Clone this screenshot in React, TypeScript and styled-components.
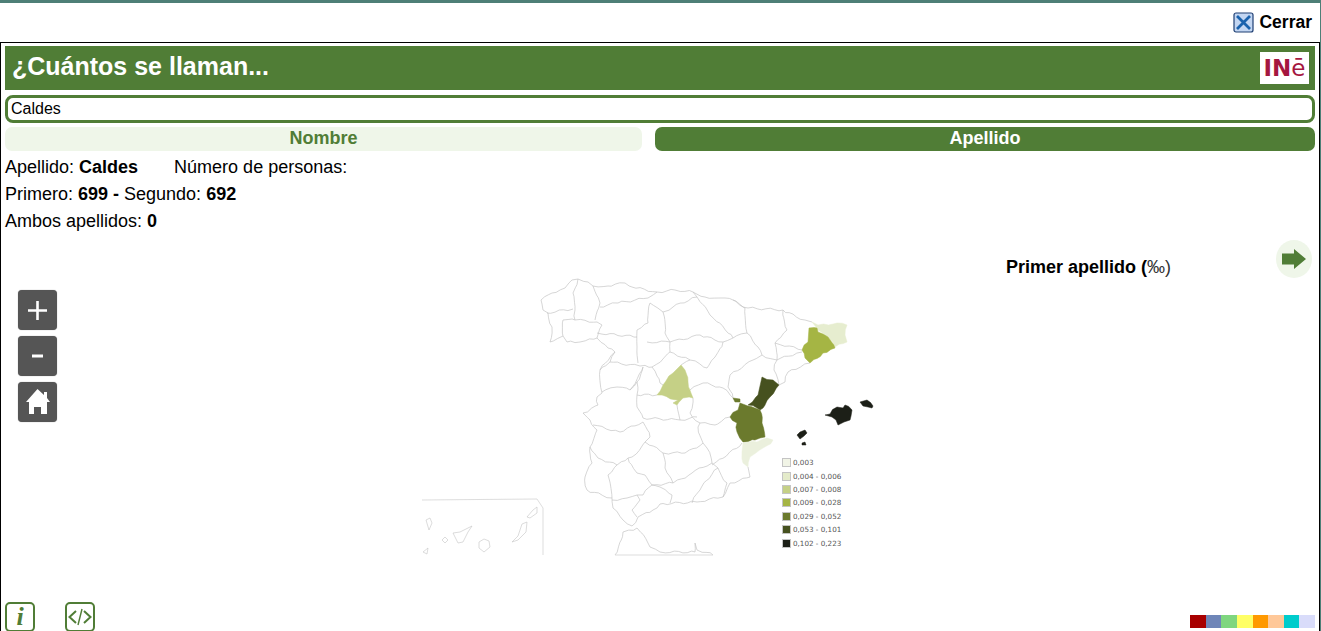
import * as React from 'react'
import styled, { createGlobalStyle } from 'styled-components'

const GREEN = '#507d36'
const BORDER_LINE = '#c4c4c4'

const GlobalStyle = createGlobalStyle`
  html, body {
    margin: 0;
    height: 100%;
    overflow: hidden;
    background: #fff;
    font-family: "Liberation Sans", Arial, sans-serif;
    color: #000;
  }
`

const Page = styled.div`
  width: 1321px;
  height: 631px;
  overflow: hidden;
  display: flex;
  flex-direction: column;
  box-sizing: border-box;
  border-top: 3px solid #4e7f77;
  border-right: 1px solid #4e7f77;
`

const CloseRow = styled.div`
  height: 39px;
  flex: none;
  display: flex;
  align-items: center;
  justify-content: flex-end;
  gap: 5px;
  padding: 0 8px 1px 0;
  box-sizing: border-box;
  font-size: 17.5px;
  font-weight: 700;
`

const Panel = styled.div`
  flex: 1;
  min-height: 0;
  display: flex;
  flex-direction: column;
  box-sizing: border-box;
  border: 1px solid #000;
  border-bottom: 0;
  padding: 3px 4px 0;
`

const Header = styled.div`
  height: 44px;
  flex: none;
  display: flex;
  align-items: center;
  justify-content: space-between;
  padding: 0 6px 0 7px;
  box-sizing: border-box;
  background: ${GREEN};
`

const Title = styled.div`
  font-size: 25px;
  font-weight: 700;
  color: #fff;
  padding-bottom: 3px;
`

const Logo = styled.div`
  width: 49px;
  height: 32px;
  display: flex;
  align-items: center;
  justify-content: center;
  background: #fff;
  color: #a5173f;
  font-family: "DejaVu Sans", sans-serif;
  font-size: 23px;
  font-weight: 700;
`

const LogoE = styled.span`
  font-weight: 400;
`

const Search = styled.input`
  height: 28px;
  flex: none;
  margin-top: 5px;
  padding: 0 3px;
  box-sizing: border-box;
  border: 3px solid ${GREEN};
  border-radius: 8px;
  outline: none;
  background: #fff;
  font-family: inherit;
  font-size: 16px;
  color: #000;
`

const Tabs = styled.div`
  flex: none;
  display: grid;
  grid-template-columns: 637px 660px;
  gap: 13px;
  margin-top: 4px;
`

const Tab = styled.div<{ $active?: boolean }>`
  height: 24px;
  line-height: 23px;
  text-align: center;
  border-radius: 7px;
  font-size: 18px;
  font-weight: 700;
  background: ${props => (props.$active ? GREEN : '#eff6e9')};
  color: ${props => (props.$active ? '#fff' : GREEN)};
`

const Info = styled.div`
  flex: none;
  margin-top: 3px;
  font-size: 18px;
  line-height: 27px;
`

const Gap = styled.span`
  display: inline-block;
  width: 36px;
`

const MapArea = styled.div`
  position: relative;
  height: 367px;
  flex: none;
  padding: 40px 0 0 415px;
  box-sizing: border-box;
`

const MapDrawing = styled.svg`
  display: block;
  filter: blur(0.3px);
`

const ZoomControls = styled.div`
  position: absolute;
  left: 13px;
  top: 55px;
  display: flex;
  flex-direction: column;
  gap: 6px;
`

const ZoomButton = styled.div`
  width: 39px;
  height: 40px;
  border-radius: 4px;
  background: #555;
  box-shadow: 0 0 1px #888;
  display: flex;
  align-items: center;
  justify-content: center;
`

const MapTitle = styled.div`
  position: absolute;
  left: 1001px;
  top: 22px;
  font-size: 18px;
  font-weight: 700;
`

const Permil = styled.span`
  font-weight: 400;
  color: #333;
`

const NextButton = styled.div`
  position: absolute;
  left: 1271px;
  top: 5px;
  width: 36px;
  height: 38px;
  border-radius: 50%;
  background: #eff6e9;
  display: flex;
  align-items: center;
  justify-content: center;
`

const Legend = styled.div`
  position: absolute;
  left: 777px;
  top: 221px;
  display: flex;
  flex-direction: column;
`

const LegendRow = styled.div`
  height: 13.4px;
  display: flex;
  align-items: center;
  gap: 2px;
  font-family: "DejaVu Sans", Verdana, sans-serif;
  font-size: 7.2px;
  color: #555;
`

const LegendSwatch = styled.span<{ $color: string }>`
  width: 7px;
  height: 7px;
  border: 1px solid #c4c4c4;
  background: ${props => props.$color};
`

const BottomBar = styled.div`
  flex: none;
  display: flex;
  justify-content: space-between;
`

const Tools = styled.div`
  display: flex;
  gap: 30px;
`

const ToolButton = styled.div`
  width: 30px;
  height: 30px;
  box-sizing: border-box;
  border: 2px solid ${GREEN};
  border-radius: 5px;
  display: flex;
  align-items: center;
  justify-content: center;
  color: ${GREEN};
`

const InfoGlyph = styled.span`
  font-family: "Liberation Serif", serif;
  font-size: 26px;
  font-weight: 700;
  font-style: italic;
  line-height: 24px;
`

const Palette = styled.div`
  display: flex;
  margin-top: 13px;
`

const PaletteColor = styled.span<{ $color: string }>`
  width: 15.625px;
  height: 13px;
  background: ${props => props.$color};
`

// rough, repeatable wiggle so the province borders don't look like straight polylines
const wiggle = (line: string) => {
  const pts = line.split(' ').map(p => p.split(',').map(Number))
  const out: string[] = []
  pts.forEach((p, i) => {
    out.push(`${p[0]},${p[1]}`)
    const next = pts[i + 1]
    if (!next) return
    const len = Math.hypot(next[0] - p[0], next[1] - p[1])
    const steps = Math.floor(len / 4)
    for (let s = 1; s < steps; s++) {
      const t = s / steps
      const nx = Math.sin(p[0] * 12.9 + p[1] * 78.2 + s * 37.7) * 1.1
      const ny = Math.cos(p[0] * 39.3 + p[1] * 11.1 + s * 17.3) * 1.1
      out.push(`${(p[0] + (next[0] - p[0]) * t + nx).toFixed(1)},${(p[1] + (next[1] - p[1]) * t + ny).toFixed(1)}`)
    }
  })
  return out.join(' ')
}

const BORDERS = [
  // coast and frontier
  '541,300 552,293 565,288 572,280 578,279 588,282 593,286 608,286 625,283 632,287 657,292 675,290 693,292 705,297 720,298 733,300 748,308 783,310 805,320 812,322',
  '541,300 543,310 548,313 552,327 550,342 563,336 567,342 580,342 597,338',
  '597,338 608,348 615,352 600,370 602,393 597,397 598,405 583,413 590,420 597,430 590,447 592,463 585,477 587,490 612,498 613,508 623,520 632,526 638,517 653,510 660,504 697,502 723,497 730,483 750,477 748,467',
  '810,363 788,372 785,382 779,385',
  // galicia, asturias, castilla
  '578,279 573,293 575,310 575,320 563,320 563,336',
  '547,313 573,309',
  '575,320 597,322 602,325 597,338',
  '593,286 600,303 595,320',
  '600,307 618,303 648,298 657,292',
  '650,303 648,323 637,330 637,347 638,363',
  '597,333 637,337',
  '615,352 610,362 640,366 652,367 670,352 670,342 647,342',
  '650,303 663,312 665,333 670,342',
  '663,312 673,307 697,297 693,292',
  '600,370 610,362',
  '602,392 617,387 630,390 643,367',
  '630,390 637,382 643,367',
  '652,367 660,383 663,385',
  '637,382 637,395 657,395',
  '637,395 637,407 643,418 680,420 697,417',
  '693,398 690,413 700,423',
  '677,405 680,420',
  // aragon, navarra, rioja
  '670,352 690,360 681,365',
  '690,360 707,368 715,357 723,342 733,338',
  '670,342 700,335 723,342',
  '697,297 710,315 733,338',
  '733,300 745,308 747,333 762,355 753,360',
  '733,338 747,333',
  '783,310 787,330 775,343 777,360 774,370 779,385',
  '762,355 777,360',
  '775,343 802,350',
  '753,360 730,375 728,387 733,398',
  '777,360 802,352',
  '690,390 703,383 723,388 733,398',
  '730,417 715,425 700,423 698,427',
  // south
  '593,425 620,432 643,422 650,437 645,442',
  '598,458 617,465 628,458 632,457 645,442',
  '645,442 663,453 685,453 703,443 698,427',
  '703,443 707,448 712,463',
  '663,453 665,468 673,483 692,473 712,463',
  '712,465 742,443',
  '712,463 718,468 727,483 723,497',
  '718,468 700,490 692,503',
  '673,483 652,485 645,475 637,473 628,458',
  '608,475 612,498',
  '608,475 617,465',
  '612,500 627,498 637,495 640,500 632,510 637,517',
  '652,485 643,495 637,495',
  '652,485 660,487 672,495 670,503',
  '590,447 598,458',
  // morocco strip
  '615,555 623,532 637,528 650,547 660,552 695,552 695,543 697,550 713,555',
]

// the inset frames are ruled lines in the original, no wiggle on these
const FRAMES = ['615,555 713,555', '422,500 537,499 543,508 543,555']

const ISLANDS = [
  '426,520 430,518 432,523 429,530',
  '453,533 460,532 472,526 468,532 463,542 458,543',
  '442,540 445,537 448,540 445,543',
  '423,552 428,548 427,554',
  '479,542 484,539 489,541 490,547 484,552 479,548',
  '527,522 526,532 518,540 512,542 518,536 522,524',
  '527,517 533,510 537,507 537,513 530,518',
]

const FILLED = [
  { color: '#c5d086', points: '681,365 685,370 688,382 693,398 683,398 677,405 673,403 678,400 657,395 663,385 673,373' },
  { color: '#e6edcf', points: '812,322 818,325 837,323 847,325 845,335 847,342 835,347 828,337 818,330 816,327' },
  { color: '#a5b544', points: '809,328 817,328 818,332 828,337 835,348 823,353 810,363 805,358 802,350 808,342' },
  { color: '#46511f', points: '762,377 773,380 779,385 770,397 763,408 760,410 748,405 758,395' },
  { color: '#6b7a2d', points: '740,403 748,406 760,410 762,423 765,437 755,440 743,442 737,432 737,423 730,417 738,410' },
  { color: '#6b7a2d', points: '733,398 740,399 740,402 735,402' },
  { color: '#ebf0dd', points: '743,443 757,442 767,438 773,440 763,448 750,457 748,467 743,463 742,452' },
  { color: '#1c1f17', points: '825,415 830,414 837,407 843,408 845,405 852,410 851,416 850,420 844,422 838,425 836,420 832,417' },
  { color: '#1c1f17', points: '860,402 867,400 873,406 872,408 868,407 863,406' },
  { color: '#1c1f17', points: '797,435 800,432 805,430 807,433 804,436 800,439' },
  { color: '#1c1f17', points: '802,443 805,442 806,445 802,445' },
]

const LEGEND = [
  { color: '#f1f4e6', label: '0,003' },
  { color: '#e4ebca', label: '0,004 - 0,006' },
  { color: '#c5d086', label: '0,007 - 0,008' },
  { color: '#a5b544', label: '0,009 - 0,028' },
  { color: '#6b7a2d', label: '0,029 - 0,052' },
  { color: '#46511f', label: '0,053 - 0,101' },
  { color: '#1c1f17', label: '0,102 - 0,223' },
]

const PALETTE = ['#a80000', '#6f86b8', '#7fd67f', '#ffff66', '#ff9900', '#ffc899', '#00cccc', '#d9dcfa']

const SpainMap = () => (
  <MapDrawing width={460} height={285} viewBox="420 275 460 285">
    {BORDERS.map(line => (
      <polyline key={line} points={wiggle(line)} fill="none" stroke={BORDER_LINE} strokeWidth={0.7} />
    ))}
    {FRAMES.map(line => (
      <polyline key={line} points={line} fill="none" stroke="#d4d4d4" strokeWidth={0.8} />
    ))}
    {ISLANDS.map(island => (
      <polygon key={island} points={island} fill="#fff" stroke={BORDER_LINE} strokeWidth={0.6} />
    ))}
    {FILLED.map(region => (
      <polygon key={region.points} points={wiggle(region.points)} fill={region.color} stroke={region.color} strokeWidth={0.5} />
    ))}
  </MapDrawing>
)

const CloseIcon = () => (
  <svg width={21} height={21} viewBox="0 0 21 21">
    <rect x={1} y={1} width={19} height={19} rx={2} fill="#c3d6f2" stroke="#1f3f73" strokeWidth={1.2} />
    <path d="M4 4 L17 17 M17 4 L4 17" stroke="#1a62ad" strokeWidth={2.8} />
  </svg>
)

const App = () => (
  <Page>
    <GlobalStyle />
    <CloseRow>
      <CloseIcon />
      Cerrar
    </CloseRow>
    <Panel>
      <Header>
        <Title>¿Cuántos se llaman...</Title>
        <Logo>
          IN<LogoE>ē</LogoE>
        </Logo>
      </Header>
      <Search defaultValue="Caldes" />
      <Tabs>
        <Tab>Nombre</Tab>
        <Tab $active>Apellido</Tab>
      </Tabs>
      <Info>
        <div>
          Apellido: <b>Caldes</b>
          <Gap />
          Número de personas:
        </div>
        <div>
          Primero: <b>699 -</b> Segundo: <b>692</b>
        </div>
        <div>
          Ambos apellidos: <b>0</b>
        </div>
      </Info>
      <MapArea>
        <SpainMap />
        <ZoomControls>
          <ZoomButton>
            <svg width={21} height={21} viewBox="0 0 21 21">
              <path d="M10.5 1 V20 M1 10.5 H20" stroke="#fff" strokeWidth={2.6} />
            </svg>
          </ZoomButton>
          <ZoomButton>
            <svg width={11} height={4} viewBox="0 0 11 4">
              <rect width={11} height={3} y={0.5} fill="#fff" />
            </svg>
          </ZoomButton>
          <ZoomButton>
            <svg width={39} height={39} viewBox="0 0 39 39">
              <path
                d="M19.5 6 L26 12 V9 H29 V15 L32 19 H29 V31 H23 V24 H16 V31 H11 V19 H8 Z"
                fill="#fff"
              />
            </svg>
          </ZoomButton>
        </ZoomControls>
        <MapTitle>
          Primer apellido (<Permil>‰)</Permil>
        </MapTitle>
        <NextButton>
          <svg width={24} height={20} viewBox="0 0 24 20">
            <path d="M0 4.5 H12 V0 L24 10 L12 20 V15.5 H0 Z" fill={GREEN} />
          </svg>
        </NextButton>
        <Legend>
          {LEGEND.map(item => (
            <LegendRow key={item.label}>
              <LegendSwatch $color={item.color} />
              {item.label}
            </LegendRow>
          ))}
        </Legend>
      </MapArea>
      <BottomBar>
        <Tools>
          <ToolButton>
            <InfoGlyph>i</InfoGlyph>
          </ToolButton>
          <ToolButton>
            <svg width={24} height={20} viewBox="0 0 24 20" fill="none" stroke={GREEN} strokeWidth={2}>
              <path d="M8 4 L1.5 10 L8 16 M16 4 L22.5 10 L16 16" />
              <path d="M14 2 L10 18" strokeWidth={1.4} />
            </svg>
          </ToolButton>
        </Tools>
        <Palette>
          {PALETTE.map(color => (
            <PaletteColor key={color} $color={color} />
          ))}
        </Palette>
      </BottomBar>
    </Panel>
  </Page>
)

export default App
